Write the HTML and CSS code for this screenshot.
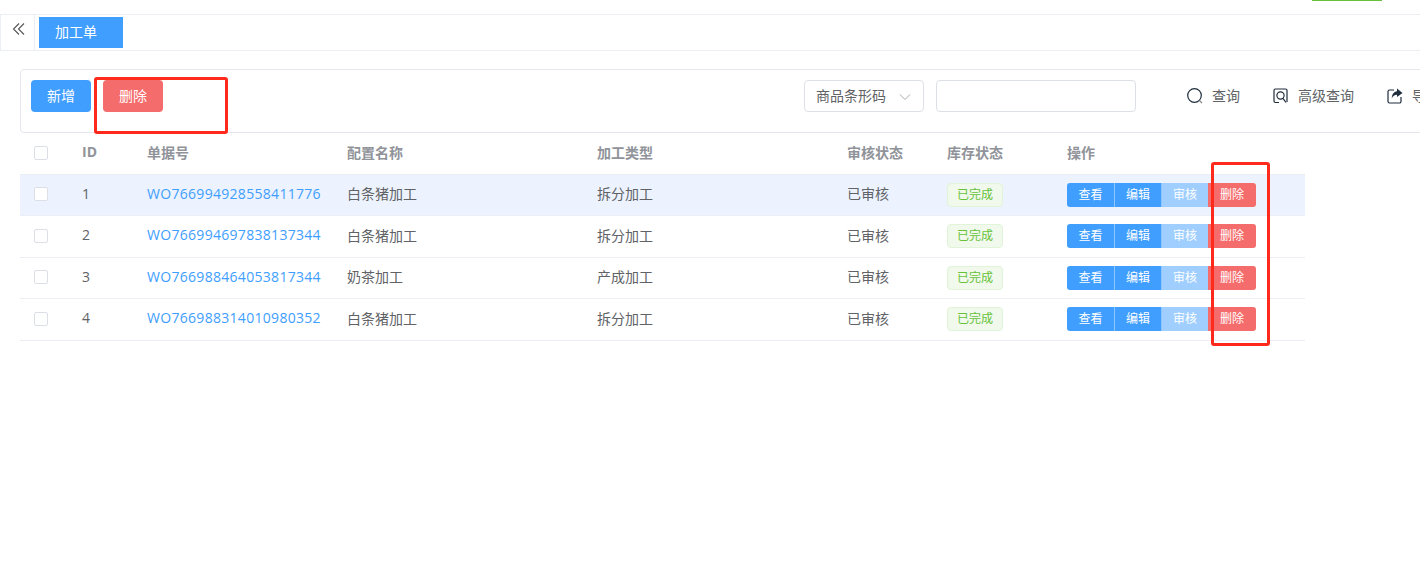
FILE: index.html
```html
<!DOCTYPE html>
<html lang="zh-CN">
<head>
  <meta charset="UTF-8">
  <meta name="viewport" content="width=device-width, initial-scale=1.0">
  <title>加工单</title>
  <link rel="stylesheet" href="styles.css">
</head>
<body>

  <div class="topbar"><span class="top-green"></span></div>

  <div class="tabbar">
    <div class="collapse">
      <svg width="14" height="14" viewBox="0 0 14 14" fill="none" stroke="#555" stroke-width="1.100">
        <path d="M7 1.500 1.500 7 7 12.500"/>
        <path d="M12 1.500 6.500 7 12 12.500"/>
      </svg>
    </div>
    <div class="tab">加工单</div>
  </div>

  <div class="content">
    <div class="toolbar">
      <button class="btn btn-blue">新增</button>
      <button class="btn btn-red">删除</button>
      <div class="select">
        <span>商品条形码</span>
        <svg width="12" height="12" viewBox="0 0 12 12" fill="none" stroke="#aaa" stroke-width="1">
          <path d="M1 3.500 6 8.500 11 3.500"/>
        </svg>
      </div>
      <input class="search" type="text">
      <a class="tool tool-first">
        <svg width="16" height="16" viewBox="0 0 16 16" fill="none" stroke="#1f2d3d" stroke-width="1.200">
          <circle cx="7.500" cy="7.500" r="6.800"/>
          <path d="M12.500 12.500 15 15" stroke="#888"/>
        </svg>
        查询
      </a>
      <a class="tool">
        <svg width="16" height="16" viewBox="0 0 16 16" fill="none" stroke="#1f2d3d" stroke-width="1.200">
          <path d="M6 14.500H2.500a1.500 1.500 0 0 1-1.500-1.500V2.500A1.500 1.500 0 0 1 2.500 1h10A1.500 1.500 0 0 1 14 2.500V14"/>
          <circle cx="7.500" cy="7.500" r="3.600"/>
          <path d="M10 10.300 13 14.500"/>
        </svg>
        高级查询
      </a>
      <a class="tool">
        <svg width="16" height="16" viewBox="0 0 16 16" fill="none" stroke="#1f2d3d" stroke-width="1.200">
          <path d="M7 2H2.500A1.500 1.500 0 0 0 1 3.500v10A1.500 1.500 0 0 0 2.500 15h10a1.500 1.500 0 0 0 1.500-1.500V9"/>
          <path d="M10 0.500 15.500 5 10 9V6.800C7.500 6.800 5.800 8 4.800 10.500 4.800 6.500 6.800 3.500 10 3.200Z" fill="#1f2d3d" stroke="none"/>
        </svg>
        导出
      </a>
    </div>

    <table class="grid">
      <colgroup>
        <col class="c-check"><col class="c-id"><col class="c-no"><col class="c-name">
        <col class="c-type"><col class="c-audit"><col class="c-stock"><col class="c-ops">
      </colgroup>
      <thead>
        <tr>
          <th class="check"><span class="box"></span></th>
          <th>ID</th>
          <th>单据号</th>
          <th>配置名称</th>
          <th>加工类型</th>
          <th>审核状态</th>
          <th>库存状态</th>
          <th>操作</th>
        </tr>
      </thead>
      <tbody>
        <tr class="hover">
          <td class="check"><span class="box"></span></td>
          <td>1</td>
          <td><a class="link">WO766994928558411776</a></td>
          <td>白条猪加工</td>
          <td>拆分加工</td>
          <td>已审核</td>
          <td><span class="tag">已完成</span></td>
          <td><div class="ops"><span class="view">查看</span><span class="edit">编辑</span><span class="off">审核</span><span class="del">删除</span></div></td>
        </tr>
        <tr>
          <td class="check"><span class="box"></span></td>
          <td>2</td>
          <td><a class="link">WO766994697838137344</a></td>
          <td>白条猪加工</td>
          <td>拆分加工</td>
          <td>已审核</td>
          <td><span class="tag">已完成</span></td>
          <td><div class="ops"><span class="view">查看</span><span class="edit">编辑</span><span class="off">审核</span><span class="del">删除</span></div></td>
        </tr>
        <tr>
          <td class="check"><span class="box"></span></td>
          <td>3</td>
          <td><a class="link">WO766988464053817344</a></td>
          <td>奶茶加工</td>
          <td>产成加工</td>
          <td>已审核</td>
          <td><span class="tag">已完成</span></td>
          <td><div class="ops"><span class="view">查看</span><span class="edit">编辑</span><span class="off">审核</span><span class="del">删除</span></div></td>
        </tr>
        <tr>
          <td class="check"><span class="box"></span></td>
          <td>4</td>
          <td><a class="link">WO766988314010980352</a></td>
          <td>白条猪加工</td>
          <td>拆分加工</td>
          <td>已审核</td>
          <td><span class="tag">已完成</span></td>
          <td><div class="ops"><span class="view">查看</span><span class="edit">编辑</span><span class="off">审核</span><span class="del">删除</span></div></td>
        </tr>
      </tbody>
    </table>
  </div>

  <!-- red annotation boxes drawn over the screenshot -->
  <div class="mark mark-top"></div>
  <div class="mark mark-col"></div>

</body>
</html>
```

FILE: styles.css
```css
html, body {
  margin: 0;
  height: 100%;
  overflow: hidden;
  background: #fff;
}

body {
  position: relative;
  width: 1420px;
  font-family: "Open Sans", "Noto Sans CJK SC", sans-serif;
  font-size: 14px;
  color: #606266;
}

.topbar {
  height: 14px;
  display: flex;
  justify-content: flex-end;
  padding-right: 38px;
  border-bottom: 1px solid #ebeef5;
}

.top-green {
  width: 70px;
  height: 1px;
  background: #67c23a;
}

.tabbar {
  height: 35px;
  display: flex;
  border-bottom: 1px solid #ebeef5;
}

.collapse {
  width: 35px;
  height: 35px;
  box-sizing: border-box;
  border-left: 1px solid #ebeef5;
  border-right: 1px solid #ebeef5;
  padding: 7px 0 0 11px;
}

.collapse svg {
  display: block;
}

.tab {
  width: 84px;
  height: 31px;
  margin: 2px 0 0 4px;
  padding-left: 16px;
  box-sizing: border-box;
  background: #409eff;
  color: #fff;
  line-height: 30px;
}

.content {
  padding: 18px 0 0 20px;
}

.toolbar {
  width: 1500px;
  height: 64px;
  box-sizing: border-box;
  padding: 10px;
  display: flex;
  align-items: flex-start;
  border: 1px solid #e4e7ed;
  border-radius: 4px;
}

.btn {
  width: 60px;
  height: 32px;
  padding: 0 0 2px;
  border: 0;
  border-radius: 4px;
  color: #fff;
  font: inherit;
}

.btn-blue {
  background: #409eff;
}

.btn-red {
  margin-left: 12px;
  background: #f56c6c;
}

.select {
  width: 120px;
  height: 32px;
  margin-left: 641px;
  padding: 0 12px 0 11px;
  box-sizing: border-box;
  display: flex;
  align-items: center;
  justify-content: space-between;
  border: 1px solid #dcdfe6;
  border-radius: 4px;
}

.select span {
  margin-bottom: 2px;
}

.select svg {
  margin-top: 1px;
}

.search {
  width: 200px;
  height: 32px;
  margin-left: 12px;
  box-sizing: border-box;
  border: 1px solid #dcdfe6;
  border-radius: 4px;
}

.tool {
  display: flex;
  align-items: center;
  gap: 9px;
  height: 30px;
  margin-left: 33px;
}

.tool-first {
  margin-left: 51px;
}

.tool svg {
  margin-top: 2px;
}

.grid {
  width: 1285px;
  table-layout: fixed;
  border-collapse: separate;
  border-spacing: 0;
}

.c-check { width: 52px; }
.c-id { width: 65px; }
.c-no { width: 200px; }
.c-name { width: 250px; }
.c-type { width: 250px; }
.c-audit { width: 100px; }
.c-stock { width: 120px; }
.c-ops { width: 248px; }

th, td {
  padding: 0 0 3px 10px;
  text-align: left;
  font-weight: normal;
  border-bottom: 1px solid #ebeef5;
}

th {
  height: 41.500px;
  box-sizing: border-box;
  color: #909399;
  font-weight: bold;
}

td {
  height: 41.500px;
  box-sizing: border-box;
}

.check {
  padding-left: 14px;
  padding-bottom: 1px;
}

.box {
  display: block;
  width: 14px;
  height: 14px;
  box-sizing: border-box;
  border: 1px solid #dcdfe6;
  border-radius: 2px;
  background: #fff;
}

.hover td {
  background: #ecf3fe;
}

.link {
  color: #409eff;
  letter-spacing: 0.300px;
}

.tag {
  display: block;
  width: 56px;
  height: 24px;
  margin-top: 3px;
  box-sizing: border-box;
  border: 1px solid #e1f3d8;
  border-radius: 4px;
  background: #f0f9eb;
  color: #67c23a;
  font-size: 12px;
  line-height: 22px;
  text-align: center;
}

.ops {
  display: flex;
  width: 189px;
  height: 24px;
  margin-top: 3px;
  border-radius: 3px;
  overflow: hidden;
  color: #fff;
  font-size: 12px;
  line-height: 24px;
  text-align: center;
}

.ops span {
  flex: none;
  box-sizing: border-box;
}

.ops .view {
  width: 48px;
  background: #409eff;
  border-right: 1px solid #8cc5ff;
}

.ops .edit {
  width: 47px;
  background: #409eff;
  border-right: 1px solid #8cc5ff;
}

.ops .off {
  width: 46px;
  background: #a0cfff;
}

.ops .del {
  width: 48px;
  background: #f56c6c;
}

.mark {
  position: absolute;
  box-sizing: border-box;
  border: 3px solid #ff2a1c;
  border-radius: 3px;
}

.mark-top {
  left: 94px;
  top: 77px;
  width: 134px;
  height: 57px;
}

.mark-col {
  left: 1211px;
  top: 162px;
  width: 59px;
  height: 184px;
}
```
